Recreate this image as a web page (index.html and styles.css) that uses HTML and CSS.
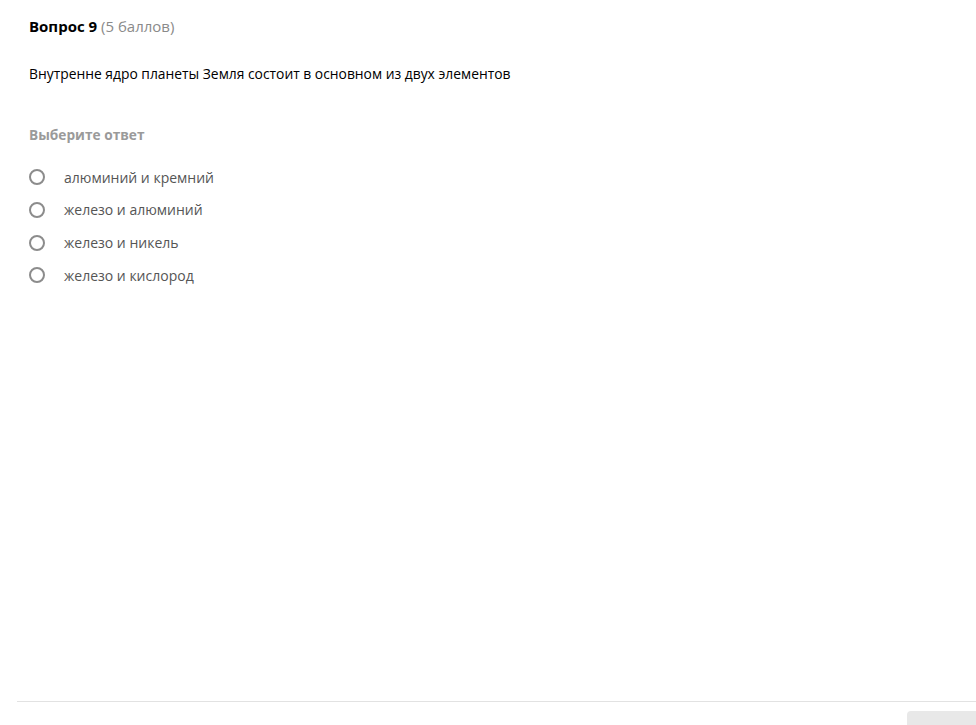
FILE: index.html
```html
<!DOCTYPE html>
<html lang="ru">
<head>
<meta charset="utf-8">
<link rel="stylesheet" href="styles.css">
</head>
<body>
<div class="page">
  <div class="question">
    <h2 class="q-title"><span class="q-num">Вопрос 9</span> <span class="q-points">(5 баллов)</span></h2>
    <p class="q-text">Внутренне ядро планеты Земля состоит в основном из двух элементов</p>
    <div class="q-prompt">Выберите ответ</div>
    <ul class="options">
      <li class="option"><span class="radio"></span><span class="opt-label">алюминий и кремний</span></li>
      <li class="option"><span class="radio"></span><span class="opt-label">железо и алюминий</span></li>
      <li class="option"><span class="radio"></span><span class="opt-label">железо и никель</span></li>
      <li class="option"><span class="radio"></span><span class="opt-label">железо и кислород</span></li>
    </ul>
  </div>
  <div class="footer">
    <div class="footer-btn"></div>
  </div>
</div>
</body>
</html>
```
FILE: styles.css
```css
* { box-sizing: border-box; }
html, body { margin: 0; padding: 0; background: #fff; }
body {
  font-family: "Open Sans", "Liberation Sans", sans-serif;
  color: #000;
  width: 976px;
  height: 725px;
  overflow: hidden;
}
.page {
  height: 725px;
  display: flex;
  flex-direction: column;
}
.question {
  flex: 1;
  padding: 16px 0 0 29px;
}
.q-title {
  margin: 0;
  font-size: 15px;
  line-height: 20px;
  font-weight: 400;
}
.q-num { font-weight: 700; color: #000; }
.q-points { color: #8a8a8a; }
.q-text {
  margin: 29px 0 0;
  font-size: 13.85px;
  line-height: 18px;
  color: #000;
}
.q-prompt {
  margin-top: 43px;
  font-size: 13.7px;
  line-height: 18px;
  font-weight: 700;
  color: #9a9a9a;
}
.options {
  list-style: none;
  margin: 17px 0 0;
  padding: 0;
  display: flex;
  flex-direction: column;
}
.option {
  display: flex;
  align-items: center;
  height: 32.67px;
}
.radio {
  width: 16px;
  height: 16px;
  border: 2px solid #8c8c8c;
  border-radius: 50%;
  flex: none;
}
.opt-label {
  margin-left: 19px;
  font-size: 14px;
  color: #555;
}
.footer {
  margin-left: 17px;
  border-top: 1px solid #e2e2e2;
  height: 24px;
  display: flex;
  justify-content: flex-end;
  align-items: flex-end;
}
.footer-btn {
  width: 69px;
  height: 14px;
  background: #e8e8e8;
  border-top-left-radius: 4px;
}
```
